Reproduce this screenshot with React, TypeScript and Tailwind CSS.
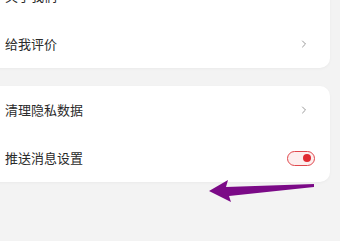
import { ChevronRight } from 'lucide-react';

interface RowProps {
    label: string;
    right?: React.ReactNode;
}

function Row({ label, right }: RowProps) {
    return (
        <div className="flex h-12 items-center justify-between pl-4 pr-[21px]">
            <span className="text-[13px] text-[#2a2a2a]">{label}</span>
            {right ?? <ChevronRight size={12} strokeWidth={2} className="mr-[-1px] text-[#9a9a9a]" />}
        </div>
    );
}

function Toggle() {
    return (
        <div className="mr-[-6px] flex h-[15px] w-[28px] items-center justify-end rounded-full border-[1.5px] border-[#e0474c] bg-[#fdeeee] pr-[3px]">
            <div className="h-[8px] w-[8px] rounded-full bg-[#e02b32]" />
        </div>
    );
}

export default function App() {
    return (
        <div
            className="relative h-[241px] w-[340px] overflow-hidden bg-[#f3f3f3]"
            style={{ fontFamily: '"Noto Sans CJK SC", "Noto Sans", sans-serif' }}
        >
            <div className="-ml-[11px] -mt-[28px] flex w-[341px] flex-col gap-[18px]">
                <div className="rounded-[10px] bg-white shadow-[0_1px_3px_rgba(0,0,0,0.04)]">
                    <Row label="关于我们" />
                    <Row label="给我评价" />
                </div>
                <div className="rounded-[10px] bg-white shadow-[0_1px_3px_rgba(0,0,0,0.04)]">
                    <Row label="清理隐私数据" />
                    <Row label="推送消息设置" right={<Toggle />} />
                </div>
            </div>
            <svg className="absolute left-0 top-0" width="340" height="241">
                <polygon
                    points="209,191 228,180 226,187 314,184 314,187 229,196 231,202"
                    fill="#7b0a87"
                />
            </svg>
        </div>
    );
}
